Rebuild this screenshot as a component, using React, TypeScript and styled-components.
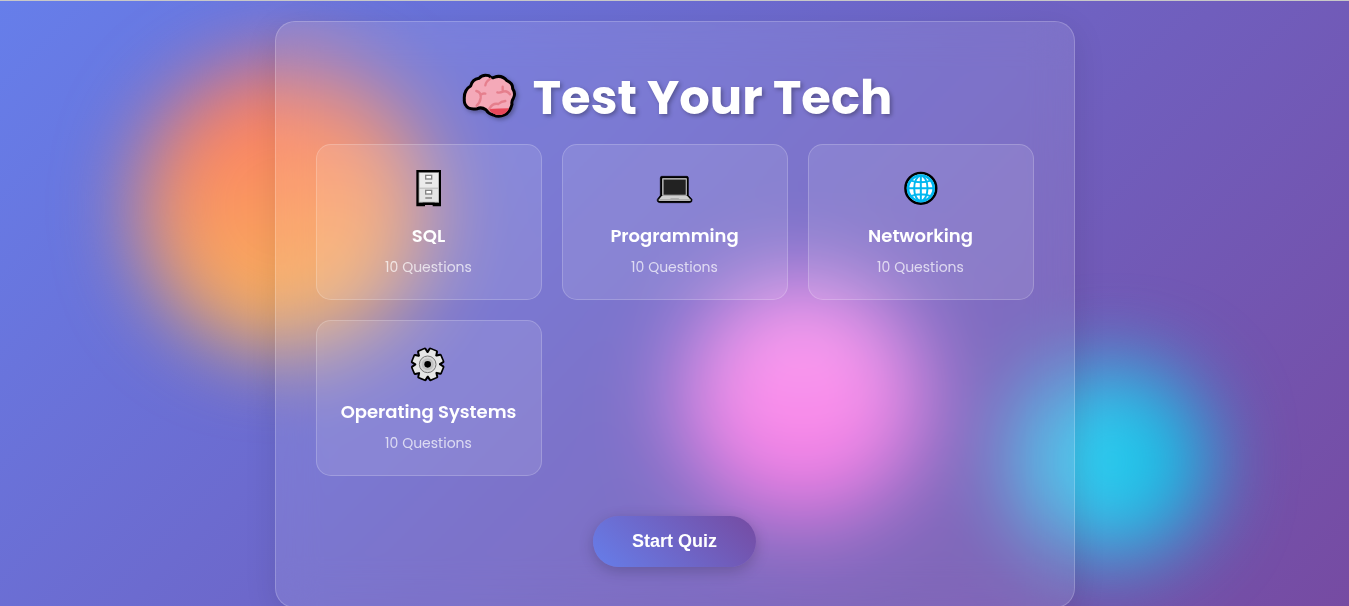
import React from "react";
import styled, { createGlobalStyle } from "styled-components";

const GlobalStyle = createGlobalStyle`
  *, *::before, *::after { box-sizing: border-box; }
  html { scrollbar-width: none; }
  body {
    margin: 0;
    min-height: 100vh;
    font-family: Poppins, Inter, "Liberation Sans", sans-serif;
    color: #fff;
    background: linear-gradient(135deg, #667eea 0%, #764ba2 100%) fixed;
  }
`;

const Page = styled.div`
  position: relative;
  min-height: 100vh;
  padding: 20px;
  border-top: 1px solid #c8c8c8;
  display: flex;
  align-items: center;
  justify-content: center;
`;

const Backdrop = styled.div`
  position: fixed;
  inset: 1px 0 0;
  overflow: hidden;
  pointer-events: none;
`;

const Blob = styled.div<{ $size: number; $left: string; $top: string; $fill: string }>`
  position: absolute;
  left: ${(p) => p.$left};
  top: ${(p) => p.$top};
  width: ${(p) => p.$size}px;
  height: ${(p) => p.$size}px;
  margin: ${(p) => -p.$size / 2}px;
  border-radius: 50%;
  background: ${(p) => p.$fill};
  filter: blur(40px);
`;

const Panel = styled.main`
  position: relative;
  width: 100%;
  max-width: 800px;
  padding: 40px;
  border: 1px solid rgba(255, 255, 255, 0.2);
  border-radius: 20px;
  background: rgba(255, 255, 255, 0.1);
  backdrop-filter: blur(20px);
  box-shadow: 0 8px 32px rgba(0, 0, 0, 0.1);
  text-align: center;
`;

const Heading = styled.h1`
  margin: 0 0 10px;
  display: flex;
  align-items: center;
  justify-content: center;
  gap: 16px;
  font-size: 48px;
  line-height: 72px;
  font-weight: 700;
  text-shadow: 2px 2px 4px rgba(0, 0, 0, 0.3);

  svg { filter: drop-shadow(2px 2px 2px rgba(0, 0, 0, 0.3)); }
`;

const TopicGrid = styled.div`
  display: grid;
  grid-template-columns: repeat(auto-fill, minmax(200px, 1fr));
  gap: 20px;
  margin-bottom: 40px;
`;

const TopicCard = styled.button`
  display: flex;
  flex-direction: column;
  align-items: center;
  padding: 20px;
  border: 1px solid rgba(255, 255, 255, 0.2);
  border-radius: 15px;
  background: rgba(255, 255, 255, 0.1);
  color: inherit;
  font-family: inherit;
  cursor: pointer;
`;

const TopicIcon = styled.svg`
  width: 46px;
  height: 47px;
  margin-bottom: 10px;
`;

const TopicName = styled.span`
  margin-bottom: 6px;
  font-size: 18px;
  line-height: 27px;
  font-weight: 600;
  white-space: nowrap;
`;

const TopicCount = styled.span`
  font-size: 14px;
  line-height: 24px;
  color: rgba(255, 255, 255, 0.7);
`;

const StartButton = styled.button`
  display: block;
  margin: 0 auto;
  padding: 15px 39px;
  border: 0;
  border-radius: 50px;
  background: linear-gradient(45deg, #667eea, #764ba2);
  box-shadow: 0 4px 15px rgba(0, 0, 0, 0.2);
  color: #fff;
  font: 700 18px/21px "Liberation Sans", Arial, sans-serif;
  cursor: pointer;
`;

const Brain = () => (
  <svg width="60" height="50" viewBox="9 24 180 150" aria-hidden="true">
    <path
      d="M31 103Q29 75 50 63Q55 43 75 40Q85 27 105 32Q113 41 120 37Q143 28 159 47Q177 55 176 71Q186 86 178 100Q172 109 174 118Q168 142 151 150Q134 158 118 150Q103 146 96 134Q82 125 70 131Q43 136 34 119Q30 112 31 103Z"
      fill="#f4a9b8"
      stroke="#000"
      strokeWidth="9"
      strokeLinejoin="round"
    />
    <path d="M103 132Q137 131 165 130Q160 143 150 147Q136 153 121 147Q109 143 103 132Z" fill="#e8485a" />
    <g fill="none" stroke="#e57f8d" strokeWidth="7" strokeLinecap="round">
      <path d="M94 61Q96 48 109 41" />
      <path d="M67 78Q82 81 80 99Q78 113 68 122M80 90Q86 84 94 86" />
      <path d="M130 82Q137 84 147 80Q159 75 168 88M146 78V65" />
      <path d="M106 131Q117 113 133 117Q142 109 154 108" />
    </g>
  </svg>
);

const CabinetIcon = () => (
  <TopicIcon viewBox="18 16 138 141" aria-hidden="true">
    <path d="M49 31H123V140H98V136H75V140H49Z" fill="#000" />
    <rect x="56" y="38" width="61" height="91" fill="#b9b9b9" />
    <rect x="59" y="40" width="55" height="44" fill="#ebebeb" />
    <rect x="59" y="87" width="55" height="39" fill="#e4e4e4" />
    <path d="M68 129H104V134H68Z" fill="#000" />
    <g fill="#fff" stroke="#858585" strokeWidth="4">
      <rect x="77" y="47" width="18" height="11" />
      <rect x="77" y="92" width="18" height="11" />
    </g>
    <path d="M76 70H96M76 115H96" stroke="#858585" strokeWidth="4" />
  </TopicIcon>
);

const LaptopIcon = () => (
  <TopicIcon viewBox="21 16 138 141" aria-hidden="true">
    <path
      d="M50 50H126Q130 50 130 55V107L141 119Q143 129 133 129H46Q35 129 37 119L46 107V55Q46 50 50 50Z"
      fill="#000"
      stroke="#000"
      strokeWidth="2"
      strokeLinejoin="round"
    />
    <rect x="51" y="55" width="75" height="54" rx="3" fill="#a8a8a8" />
    <rect x="56" y="60" width="66" height="45" fill="#222" />
    <path d="M50 109H127L137 120H41Z" fill="#d0d0d0" />
    <path d="M41 119H137V124H41Z" fill="#b8b8b8" />
    <path d="M77 116H101L103 119H75Z" fill="#a5a5a5" />
  </TopicIcon>
);

const GlobeIcon = () => (
  <TopicIcon viewBox="24 16 138 141" aria-hidden="true">
    <circle cx="92.5" cy="86" r="46" fill="#fff" stroke="#000" strokeWidth="8" />
    <g fill="none" stroke="#00b7f0" strokeWidth="6">
      <circle cx="92.5" cy="86" r="38.5" strokeWidth="8" />
      <ellipse cx="92.5" cy="86" rx="20" ry="38" />
      <path d="M92.5 46V126M53 86H132M61 62Q92 74 124 62M61 110Q92 98 124 110" />
    </g>
  </TopicIcon>
);

const TEETH = [22, 67, 112, 157, 202, 247, 292, 337];

const GearIcon = () => (
  <TopicIcon viewBox="18 16 138 141" aria-hidden="true">
    <g fill="#000" stroke="#000" strokeWidth="10" strokeLinejoin="round">
      {TEETH.map((angle) => (
        <path key={angle} d="M70 56L73 41H93L96 56Z" transform={`rotate(${angle} 83 86)`} />
      ))}
      <circle cx="83" cy="86" r="36" />
    </g>
    <g fill="#e6e6e6">
      {TEETH.map((angle) => (
        <path key={angle} d="M71 58L74 41H92L95 58Z" transform={`rotate(${angle} 83 86)`} />
      ))}
      <circle cx="83" cy="86" r="34" />
    </g>
    <circle cx="83" cy="86" r="25" fill="#d8d8d8" stroke="#777" strokeWidth="3" />
    <circle cx="83" cy="86" r="18" fill="#c2c2c2" />
    <circle cx="83" cy="86" r="10" fill="#000" />
  </TopicIcon>
);

const topics = [
  { name: "SQL", questions: 10, Icon: CabinetIcon },
  { name: "Programming", questions: 10, Icon: LaptopIcon },
  { name: "Networking", questions: 10, Icon: GlobeIcon },
  { name: "Operating Systems", questions: 10, Icon: GearIcon },
];

export default function App() {
  return (
    <>
      <GlobalStyle />
      <Page>
        <Backdrop>
          <Blob $size={290} $left="21%" $top="34%" $fill="linear-gradient(170deg, #fc7166, #f8c05a)" />
          <Blob $size={194} $left="82.5%" $top="76%" $fill="linear-gradient(90deg, #48d3f5, #0abde3)" />
          <Blob $size={242} $left="59.5%" $top="66%" $fill="linear-gradient(180deg, #ff9ff3, #f368e0)" />
        </Backdrop>
        <Panel>
          <Heading>
            <Brain />
            Test Your Tech
          </Heading>
          <TopicGrid>
            {topics.map(({ name, questions, Icon }) => (
              <TopicCard key={name} type="button">
                <Icon />
                <TopicName>{name}</TopicName>
                <TopicCount>{questions} Questions</TopicCount>
              </TopicCard>
            ))}
          </TopicGrid>
          <StartButton type="button">Start Quiz</StartButton>
        </Panel>
      </Page>
    </>
  );
}
